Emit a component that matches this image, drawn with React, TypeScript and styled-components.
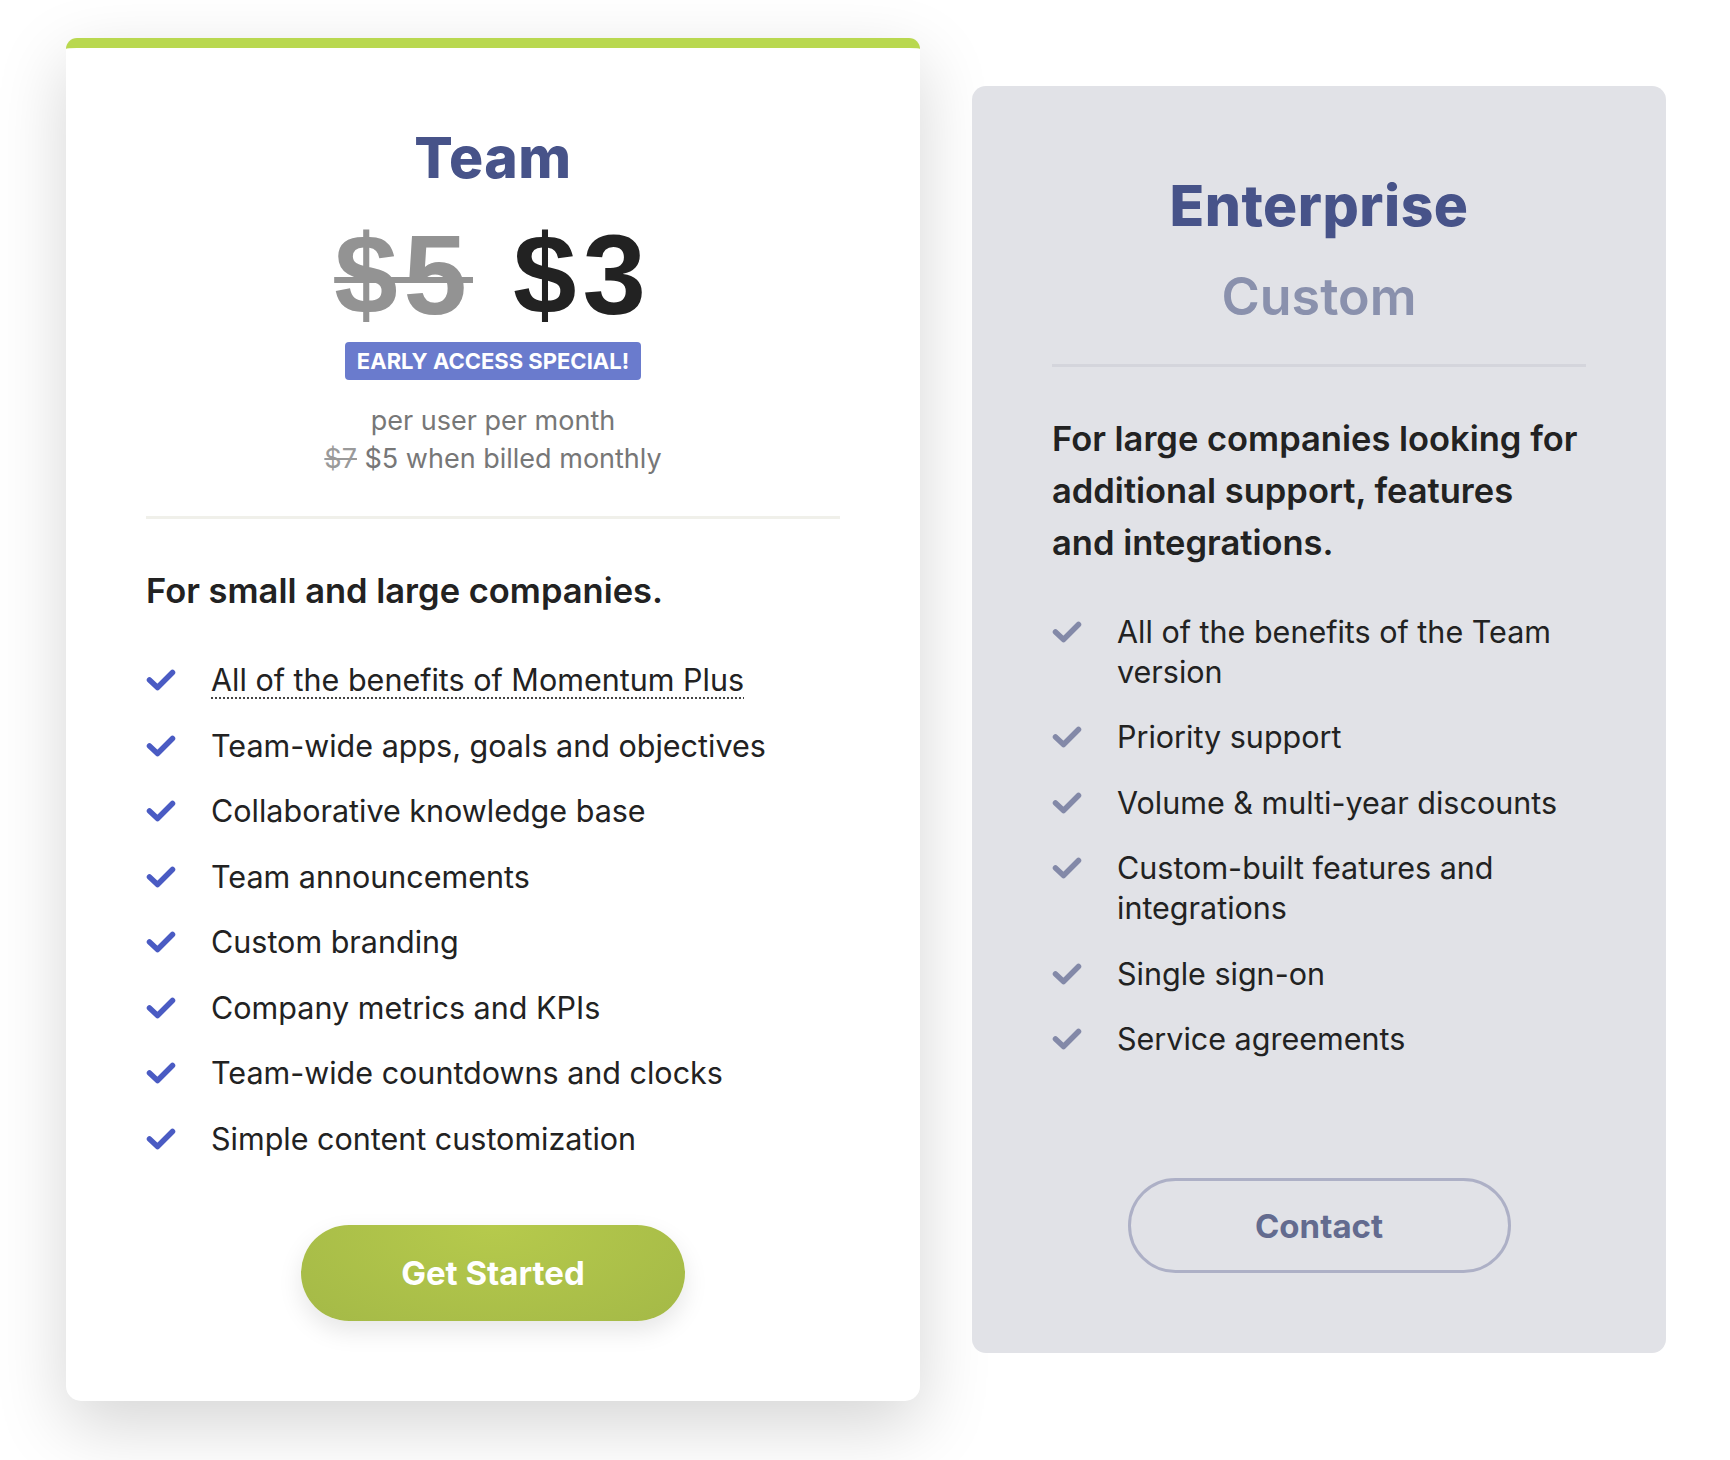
import styled, { createGlobalStyle } from "styled-components";

const GlobalStyle = createGlobalStyle`
	* {
		box-sizing: border-box;
	}

	body {
		margin: 0;
		background: #ffffff;
		font-family: Inter, "Noto Sans", sans-serif;
		color: #222222;
	}
`;

const teamFeatures = [
	"All of the benefits of Momentum Plus",
	"Team-wide apps, goals and objectives",
	"Collaborative knowledge base",
	"Team announcements",
	"Custom branding",
	"Company metrics and KPIs",
	"Team-wide countdowns and clocks",
	"Simple content customization",
];

const enterpriseFeatures = [
	"All of the benefits of the Team version",
	"Priority support",
	"Volume & multi-year discounts",
	"Custom-built features and integrations",
	"Single sign-on",
	"Service agreements",
];

const Check = ({ color }: { color: string }) => (
	<CheckIcon viewBox="0 0 30 24" width="30" height="24">
		<polyline
			points="3.5,12 11.5,19.5 26.5,4.5"
			fill="none"
			stroke={color}
			strokeWidth="5.5"
			strokeLinecap="round"
			strokeLinejoin="round"
		/>
	</CheckIcon>
);

const App = () => {
	return (
		<>
			<GlobalStyle />
			<Page>
				<Card $variant="team">
					<Title>Team</Title>
					<PriceRow>
						<OldPrice>$5</OldPrice>
						<Price>$3</Price>
					</PriceRow>
					<Badge>EARLY ACCESS SPECIAL!</Badge>
					<PriceNote>
						per user per month
						<br />
						<s>$7</s> $5 when billed monthly
					</PriceNote>
					<Divider $color="#f0f0ea" $gap={38} />
					<Lead>For small and large companies.</Lead>
					<FeatureList>
						{teamFeatures.map((feature, i) => (
							<Feature key={feature}>
								<Check color="#4a5bc3" />
								{i === 0 ? <Dotted>{feature}</Dotted> : <span>{feature}</span>}
							</Feature>
						))}
					</FeatureList>
					<Footer $gap={66}>
						<PrimaryButton>Get Started</PrimaryButton>
					</Footer>
				</Card>

				<Card $variant="enterprise">
					<Title>Enterprise</Title>
					<Custom>Custom</Custom>
					<Divider $color="#d4d5dc" $gap={35} />
					<Lead>For large companies looking for additional support, features and integrations.</Lead>
					<FeatureList>
						{enterpriseFeatures.map((feature) => (
							<Feature key={feature}>
								<Check color="#8389a8" />
								<span>{feature}</span>
							</Feature>
						))}
					</FeatureList>
					<Footer $gap={119}>
						<OutlineButton>Contact</OutlineButton>
					</Footer>
				</Card>
			</Page>
		</>
	);
};

const Page = styled.div`
	display: flex;
	align-items: flex-start;
	gap: 52px;
	padding: 38px 0 0 66px;
	min-height: 1460px;
`;

const Card = styled.div<{ $variant: "team" | "enterprise" }>`
	display: flex;
	flex-direction: column;
	align-items: center;
	width: ${({ $variant }) => ($variant === "team" ? "854px" : "694px")};
	margin-top: ${({ $variant }) => ($variant === "team" ? "0" : "48px")};
	padding: 76px 80px 80px;
	border-top: 10px solid ${({ $variant }) => ($variant === "team" ? "#b9d84f" : "transparent")};
	border-radius: ${({ $variant }) => ($variant === "team" ? "11px 11px 15px 15px" : "14px")};
	background: ${({ $variant }) => ($variant === "team" ? "#ffffff" : "#e1e2e7")};
	box-shadow: ${({ $variant }) =>
		$variant === "team" ? "0 24px 70px rgba(0, 0, 0, 0.17)" : "none"};
`;

const Title = styled.h2`
	margin: 0;
	font-size: 57px;
	line-height: 1.2;
	font-weight: 800;
	letter-spacing: 0.5px;
	color: #475389;
`;

const PriceRow = styled.div`
	display: flex;
	gap: 40px;
	margin-top: 27px;
	font-family: "Liberation Sans", Arial, sans-serif;
	font-weight: 700;
	font-size: 114px;
	line-height: 112px;
	letter-spacing: 6px;
`;

const OldPrice = styled.span`
	color: #939393;
	text-decoration: line-through;
	text-decoration-thickness: 6px;
`;

const Price = styled.span`
	color: #222222;
`;

const Badge = styled.div`
	margin-top: 11px;
	padding: 0 12px;
	height: 38px;
	line-height: 38px;
	border-radius: 4px;
	background: #6a7bcd;
	color: #ffffff;
	font-size: 22px;
	font-weight: 700;
`;

const PriceNote = styled.p`
	margin: 22px 0 0;
	text-align: center;
	font-size: 27px;
	line-height: 38px;
	color: #777777;

	s {
		color: #9a9a9a;
	}
`;

const Custom = styled.div`
	margin-top: 26px;
	font-size: 52px;
	line-height: 1.2;
	font-weight: 600;
	color: #8a91ad;
`;

const Divider = styled.hr<{ $color: string; $gap: number }>`
	align-self: stretch;
	margin: ${({ $gap }) => $gap}px 0 0;
	height: 3px;
	border: none;
	background: ${({ $color }) => $color};
`;

const Lead = styled.h3`
	align-self: stretch;
	max-width: 527px;
	margin: 46px 0 0;
	font-size: 34.5px;
	line-height: 52px;
	font-weight: 600;
	color: #222222;
`;

const FeatureList = styled.ul`
	align-self: stretch;
	display: flex;
	flex-direction: column;
	gap: 25.5px;
	margin: 43px 0 0;
	padding: 0;
	list-style: none;
`;

const Feature = styled.li`
	display: flex;
	align-items: flex-start;
	gap: 35px;
	font-size: 30.5px;
	line-height: 40px;
	color: #222222;
`;

const CheckIcon = styled.svg`
	flex-shrink: 0;
	margin-top: 8px;
`;

const Dotted = styled.span`
	text-decoration: underline dotted #444444;
	text-decoration-thickness: 2px;
	text-underline-offset: 6px;
`;

const Footer = styled.div<{ $gap: number }>`
	display: flex;
	justify-content: center;
	margin-top: ${({ $gap }) => $gap}px;
`;

const PrimaryButton = styled.button`
	width: 384px;
	height: 96px;
	border: none;
	border-radius: 48px;
	background: radial-gradient(ellipse at 50% 0%, #b6ca4c 0%, #a4b947 100%);
	box-shadow: 0 10px 24px rgba(0, 0, 0, 0.1);
	color: #ffffff;
	font-family: Inter, sans-serif;
	font-size: 33px;
	font-weight: 700;
`;

const OutlineButton = styled.button`
	width: 383px;
	height: 95px;
	border: 3px solid #adb0c6;
	border-radius: 48px;
	background: transparent;
	color: #636b8f;
	font-family: Inter, sans-serif;
	font-size: 33px;
	font-weight: 700;
`;

export default App;
